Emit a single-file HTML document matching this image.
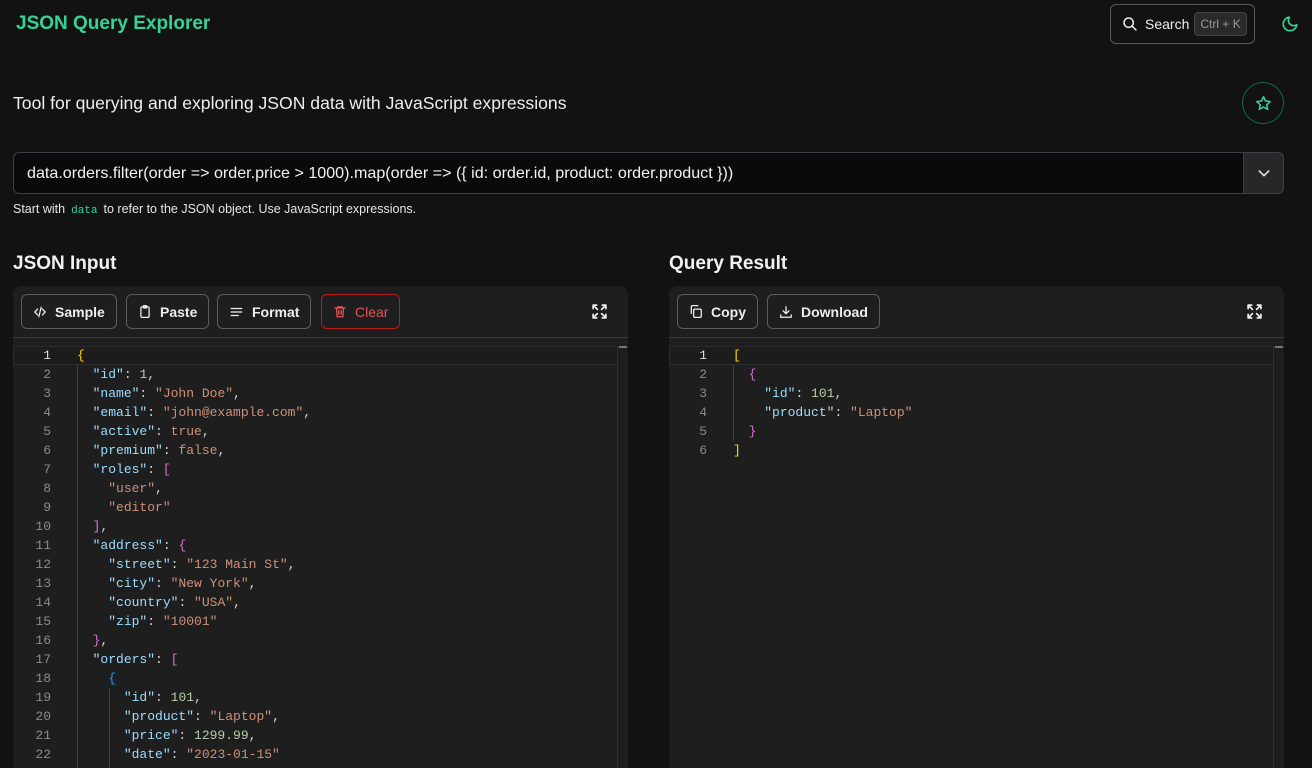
<!DOCTYPE html>
<html style="overflow:hidden"><head><meta charset="utf-8"><style>
*{box-sizing:border-box;margin:0;padding:0}
html,body{width:1312px;height:768px;overflow:hidden}
body{background:#121212;font-family:"Liberation Sans",sans-serif;color:#e8e8e8;position:relative}
.abs{position:absolute}
.title{left:16px;top:13px;font-size:19px;font-weight:bold;color:#34d399}
.search{left:1110px;top:4px;width:145px;height:40px;border:1px solid #5a5a5a;border-radius:6px;display:flex;align-items:center;padding-left:11px;font-size:14px;color:#eee}
.kbd{margin-left:5px;background:#2a2a2a;border:1px solid #444;border-radius:4px;font-size:12px;color:#9a9a9a;padding:4px 5px}
.sub{left:13px;top:93px;font-size:17.6px;color:#eee}
.star{left:1242px;top:82px;width:42px;height:42px;border:1px solid #0f6b4c;border-radius:50%;display:flex;align-items:center;justify-content:center}
.q{left:13px;top:152px;width:1231px;height:42px;background:#0a0a0c;border:1px solid #3f3f46;border-right:none;border-radius:6px 0 0 6px;font-size:16.1px;padding:11px 13px;color:#f2f2f2;white-space:nowrap}
.qb{left:1243px;top:152px;width:41px;height:42px;background:#27272a;border:1px solid #3f3f46;border-radius:0 6px 6px 0;display:flex;align-items:center;justify-content:center}
.hint{left:13px;top:202px;font-size:12.5px;color:#e6e6e6}
.hint code{font-family:"Liberation Mono",monospace;color:#34d399;font-size:11px;margin:0 6px}
h2{position:absolute;font-size:19px;font-weight:bold;color:#f2f2f2;top:253px}
.card{top:286px;height:482px;background:#1e1e1e;border-radius:8px 8px 0 0;overflow:hidden}
.hdr{position:absolute;left:0;right:0;top:51px;border-top:1px solid #3a3a3a}
.btn{position:absolute;top:8px;height:35px;border:1px solid #5c5c5c;border-radius:6px;display:flex;align-items:center;gap:8px;padding:0 11px;font-size:14px;font-weight:bold;color:#eee}
.btn.red{border-color:#b91c1c;color:#e05555;font-weight:normal}
.ed{position:absolute;left:0;right:0;top:60px;bottom:0;font-family:"Liberation Mono","DejaVu Sans Mono",monospace;font-size:13px}
.ln{position:absolute;left:0;width:38px;text-align:right;color:#8a8a8a;height:19px;line-height:19px}
.cl{position:absolute;left:64px;white-space:pre;height:19px;line-height:19px;color:#d4d4d4}
.cur{position:absolute;left:0;right:10px;top:0;height:19px;border:1px solid #2c2c2c;background:#1c1c1c}
.sb{position:absolute;right:10px;top:0;bottom:0;border-left:1px solid #2f2f2f}
.sbt{position:absolute;right:1px;top:0;width:8px;height:2px;background:#777}
.g{position:absolute;width:1px;background:#404040}
.k{color:#9cdcfe}.s{color:#ce9178}.n{color:#b5cea8}.y{color:#ffd700}.p{color:#da70d6}.b{color:#179fff}
</style></head><body>
<div class="abs title">JSON Query Explorer</div>
<div class="abs search"><svg width="16" height="16" viewBox="0 0 24 24" fill="none" stroke="#eee" stroke-width="2.2" stroke-linecap="round"><circle cx="10" cy="10" r="7"/><path d="M15 15l6 6"/></svg><span style="margin-left:7px">Search</span><span class="kbd">Ctrl + K</span></div>
<svg class="abs" style="left:1281px;top:15px" width="18" height="18" viewBox="0 0 24 24" fill="none" stroke="#34d399" stroke-width="2.2" stroke-linecap="round" stroke-linejoin="round"><path d="M21 12.8A9 9 0 1 1 11.2 3a7 7 0 0 0 9.8 9.8z"/></svg>
<div class="abs sub">Tool for querying and exploring JSON data with JavaScript expressions</div>
<div class="abs star"><svg width="17" height="17" viewBox="0 0 24 24" fill="none" stroke="#34d399" stroke-width="2.2" stroke-linejoin="round"><path d="M12 2.5l2.9 6 6.6.8-4.9 4.5 1.3 6.5L12 17l-5.9 3.3 1.3-6.5L2.5 9.3l6.6-.8z"/></svg></div>
<div class="abs q">data.orders.filter(order =&gt; order.price &gt; 1000).map(order =&gt; ({ id: order.id, product: order.product }))</div>
<div class="abs qb"><svg width="16" height="16" viewBox="0 0 24 24" fill="none" stroke="#ddd" stroke-width="2.4" stroke-linecap="round" stroke-linejoin="round"><path d="M5 9l7 7 7-7"/></svg></div>
<div class="abs hint">Start with<code>data</code>to refer to the JSON object. Use JavaScript expressions.</div>

<h2 style="left:13px">JSON Input</h2>
<h2 style="left:669px">Query Result</h2>

<div class="abs card" style="left:13px;width:615px">
 <div class="btn" style="left:8px"><svg width="14" height="14" viewBox="0 0 24 24" fill="none" stroke="#eee" stroke-width="2.2" stroke-linecap="round" stroke-linejoin="round"><path d="M8 7l-5 5 5 5M16 7l5 5-5 5M14 4l-4 16"/></svg>Sample</div>
 <div class="btn" style="left:113px"><svg width="14" height="15" viewBox="0 0 24 24" fill="none" stroke="#eee" stroke-width="2.2" stroke-linejoin="round"><rect x="5" y="4" width="14" height="18" rx="2"/><rect x="9" y="2" width="6" height="4" rx="1"/></svg>Paste</div>
 <div class="btn" style="left:204px"><svg width="15" height="14" viewBox="0 0 24 24" fill="none" stroke="#eee" stroke-width="2.2" stroke-linecap="round"><path d="M3 6h18M3 12h18M3 18h12"/></svg>Format</div>
 <div class="btn red" style="left:308px"><svg width="14" height="15" viewBox="0 0 24 24" fill="none" stroke="#e05555" stroke-width="2.2" stroke-linecap="round"><path d="M3 6h18M8 6V4h8v2M6 6l1 15h10l1-15M10 10v7M14 10v7"/></svg>Clear</div>
 <svg class="abs" style="left:578px;top:17px" width="17" height="17" viewBox="0 0 24 24" fill="none" stroke="#eee" stroke-width="2.4" stroke-linecap="round" stroke-linejoin="round"><path d="M3 8V3h5M3 3l6 6M21 8V3h-5M21 3l-6 6M3 16v5h5M3 21l6-6M21 16v5h-5M21 21l-6-6"/></svg>
 <div class="hdr"></div>
 <div class="ed">
  <div class="cur"></div><div class="sb"></div><div class="sbt"></div>
  <div class="g" style="left:64px;top:19px;height:418px"></div>
  <div class="g" style="left:96px;top:342px;height:100px"></div>
  <div class="ln" style="top:0;color:#ddd">1</div><div class="cl" style="top:0"><span class="y">{</span></div>
  <div class="ln" style="top:19px">2</div><div class="cl" style="top:19px">  <span class="k">"id"</span>: <span class="n">1</span>,</div>
  <div class="ln" style="top:38px">3</div><div class="cl" style="top:38px">  <span class="k">"name"</span>: <span class="s">"John Doe"</span>,</div>
  <div class="ln" style="top:57px">4</div><div class="cl" style="top:57px">  <span class="k">"email"</span>: <span class="s">"john@example.com"</span>,</div>
  <div class="ln" style="top:76px">5</div><div class="cl" style="top:76px">  <span class="k">"active"</span>: <span class="s">true</span>,</div>
  <div class="ln" style="top:95px">6</div><div class="cl" style="top:95px">  <span class="k">"premium"</span>: <span class="s">false</span>,</div>
  <div class="ln" style="top:114px">7</div><div class="cl" style="top:114px">  <span class="k">"roles"</span>: <span class="p">[</span></div>
  <div class="ln" style="top:133px">8</div><div class="cl" style="top:133px">    <span class="s">"user"</span>,</div>
  <div class="ln" style="top:152px">9</div><div class="cl" style="top:152px">    <span class="s">"editor"</span></div>
  <div class="ln" style="top:171px">10</div><div class="cl" style="top:171px">  <span class="p">]</span>,</div>
  <div class="ln" style="top:190px">11</div><div class="cl" style="top:190px">  <span class="k">"address"</span>: <span class="p">{</span></div>
  <div class="ln" style="top:209px">12</div><div class="cl" style="top:209px">    <span class="k">"street"</span>: <span class="s">"123 Main St"</span>,</div>
  <div class="ln" style="top:228px">13</div><div class="cl" style="top:228px">    <span class="k">"city"</span>: <span class="s">"New York"</span>,</div>
  <div class="ln" style="top:247px">14</div><div class="cl" style="top:247px">    <span class="k">"country"</span>: <span class="s">"USA"</span>,</div>
  <div class="ln" style="top:266px">15</div><div class="cl" style="top:266px">    <span class="k">"zip"</span>: <span class="s">"10001"</span></div>
  <div class="ln" style="top:285px">16</div><div class="cl" style="top:285px">  <span class="p">}</span>,</div>
  <div class="ln" style="top:304px">17</div><div class="cl" style="top:304px">  <span class="k">"orders"</span>: <span class="p">[</span></div>
  <div class="ln" style="top:323px">18</div><div class="cl" style="top:323px">    <span class="b">{</span></div>
  <div class="ln" style="top:342px">19</div><div class="cl" style="top:342px">      <span class="k">"id"</span>: <span class="n">101</span>,</div>
  <div class="ln" style="top:361px">20</div><div class="cl" style="top:361px">      <span class="k">"product"</span>: <span class="s">"Laptop"</span>,</div>
  <div class="ln" style="top:380px">21</div><div class="cl" style="top:380px">      <span class="k">"price"</span>: <span class="n">1299.99</span>,</div>
  <div class="ln" style="top:399px">22</div><div class="cl" style="top:399px">      <span class="k">"date"</span>: <span class="s">"2023-01-15"</span></div>
 </div>
</div>

<div class="abs card" style="left:669px;width:615px">
 <div class="btn" style="left:8px"><svg width="14" height="15" viewBox="0 0 24 24" fill="none" stroke="#eee" stroke-width="2.2" stroke-linejoin="round"><rect x="8" y="8" width="13" height="14" rx="2"/><path d="M4 16V4a2 2 0 0 1 2-2h10"/></svg>Copy</div>
 <div class="btn" style="left:98px"><svg width="14" height="14" viewBox="0 0 24 24" fill="none" stroke="#eee" stroke-width="2.2" stroke-linecap="round" stroke-linejoin="round"><path d="M12 3v12M7 10l5 5 5-5M3 17v4h18v-4"/></svg>Download</div>
 <svg class="abs" style="left:577px;top:17px" width="17" height="17" viewBox="0 0 24 24" fill="none" stroke="#eee" stroke-width="2.4" stroke-linecap="round" stroke-linejoin="round"><path d="M3 8V3h5M3 3l6 6M21 8V3h-5M21 3l-6 6M3 16v5h5M3 21l6-6M21 16v5h-5M21 21l-6-6"/></svg>
 <div class="hdr"></div>
 <div class="ed">
  <div class="cur"></div><div class="sb"></div><div class="sbt"></div>
  <div class="g" style="left:64px;top:19px;height:76px"></div>
  <div class="ln" style="top:0;color:#ddd">1</div><div class="cl" style="top:0"><span class="y">[</span></div>
  <div class="ln" style="top:19px">2</div><div class="cl" style="top:19px">  <span class="p">{</span></div>
  <div class="ln" style="top:38px">3</div><div class="cl" style="top:38px">    <span class="k">"id"</span>: <span class="n">101</span>,</div>
  <div class="ln" style="top:57px">4</div><div class="cl" style="top:57px">    <span class="k">"product"</span>: <span class="s">"Laptop"</span></div>
  <div class="ln" style="top:76px">5</div><div class="cl" style="top:76px">  <span class="p">}</span></div>
  <div class="ln" style="top:95px">6</div><div class="cl" style="top:95px"><span class="y">]</span></div>
 </div>
</div>
</body></html>
